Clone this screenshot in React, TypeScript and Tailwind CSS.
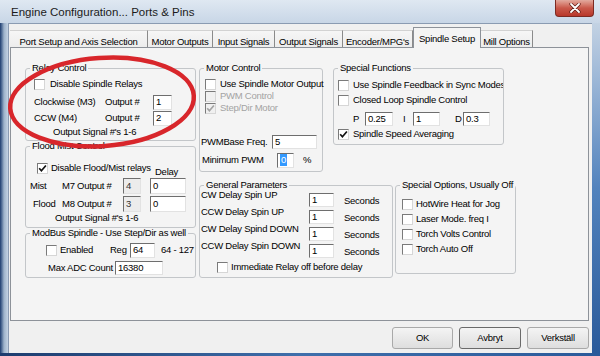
import React from "react";

const cx = (...a: (string | false | undefined | null)[]) => a.filter(Boolean).join(" ");

function Check({ checked = false, disabled = false }: { checked?: boolean; disabled?: boolean }) {
  return (
    <span
      className={cx(
        "inline-flex shrink-0 w-[11px] h-[11px] items-center justify-center border border-t-[#7a7a7a] border-l-[#7a7a7a] border-r-[#d6d6d6] border-b-[#d6d6d6]",
        disabled ? "bg-[#f0f0f0]" : "bg-white"
      )}
    >
      {checked && (
        <svg width="9" height="9" viewBox="0 0 9 9">
          <path d="M1.2 4.3 L3.4 6.8 L7.9 1.5" fill="none" stroke={disabled ? "#a3a3a3" : "#111"} strokeWidth="1.7" />
        </svg>
      )}
    </span>
  );
}

function Field({
  value,
  className,
  disabled = false,
  selected = false,
}: {
  value: string;
  className?: string;
  disabled?: boolean;
  selected?: boolean;
}) {
  return (
    <span
      className={cx(
        "flex shrink-0 items-center pl-[2px] leading-[12px] border border-t-[#6e6e6e] border-l-[#6e6e6e] border-r-[#e2e2e2] border-b-[#e2e2e2]",
        disabled ? "bg-[#ececec] text-[#333]" : "bg-white",
        className
      )}
    >
      {selected ? <span className="bg-[#3399ff] text-white px-[1px]">{value}</span> : value}
    </span>
  );
}

function Group({ title, className, children }: { title: string; className?: string; children?: React.ReactNode }) {
  return (
    <fieldset className={cx("shrink-0 min-w-0 border border-[#c3c6c9] rounded-[3px]", className)}>
      <legend className="ml-[4px] px-[2px] leading-[12px] h-[12px] whitespace-nowrap">{title}</legend>
      {children}
    </fieldset>
  );
}

function Btn({ children, className, def = false }: { children: React.ReactNode; className?: string; def?: boolean }) {
  return (
    <div
      className={cx(
        "h-[22px] flex items-center justify-center rounded-[3px] border bg-gradient-to-b from-[#f4f4f4] to-[#dedede]",
        def ? "border-[#6a6a6a]" : "border-[#a9a9a9]",
        className
      )}
    >
      {children}
    </div>
  );
}

function Tab({ label, className, selected = false }: { label: string; className?: string; selected?: boolean }) {
  if (selected) {
    return (
      <div
        className={cx(
          "h-[21px] flex items-center justify-center pt-[2px] border-l border-t border-r border-[#8d9299] bg-[#f4f4f4] relative z-10 whitespace-nowrap",
          className
        )}
      >
        {label}
      </div>
    );
  }
  return (
    <div
      className={cx(
        "h-[18px] flex items-center justify-center pt-[4px] border-t border-r border-t-[#d2d2d2] border-r-[#8a8a8a] bg-gradient-to-b from-[#f6f6f6] to-[#ececec] whitespace-nowrap",
        className
      )}
    >
      {label}
    </div>
  );
}

export default function App() {
  const gp = ["CW Delay Spin UP", "CCW Delay Spin UP", "CW Delay Spind DOWN", "CCW Delay Spin DOWN"];
  const so = ["HotWire Heat for Jog", "Laser Mode. freq I", "Torch Volts Control", "Torch Auto Off"];
  return (
    <div className="relative w-[600px] h-[356px] overflow-hidden flex flex-col bg-[#c3d2e3] font-['Liberation_Sans',Arial,sans-serif] text-[9.5px] tracking-[-0.25px] leading-[12px] text-black">
      {/* title bar */}
      <div className="relative h-[23px] shrink-0 flex items-center pl-[11px] bg-gradient-to-b from-[#dfe8f2] to-[#c8d6e6]">
        <span className="text-[11.5px] tracking-normal text-[#1b1b1b]">Engine Configuration... Ports &amp; Pins</span>
        <div className="absolute right-[6px] top-0 w-[39px] h-[17px] rounded-b-[4px] border border-t-0 border-[#7c2a22] bg-gradient-to-b from-[#e2a99e] via-[#c9584a] to-[#b8372a] flex items-center justify-center">
          <svg width="12" height="10" viewBox="0 0 12 10">
            <path d="M2 1 L10 9 M10 1 L2 9" stroke="#5a1a14" strokeWidth="3.2" strokeLinecap="round" />
            <path d="M2 1 L10 9 M10 1 L2 9" stroke="#ffffff" strokeWidth="1.8" strokeLinecap="round" />
          </svg>
        </div>
      </div>

      <div className="flex flex-1 min-h-0">
        {/* left frame */}
        <div className="w-[8px] shrink-0 bg-gradient-to-r from-[#1d3c6e] via-[#9db2ca] to-[#c3d2e3]" />

        {/* client */}
        <div className="flex-1 flex flex-col bg-[#f0f0f0] border-l border-t border-[#8a9bb2] pl-[1px] pr-[3px] pt-[3px]">
          {/* tabs */}
          <div className="h-[21px] -mb-[1px] flex items-end">
            <Tab label="Port Setup and Axis Selection" className="w-[138px]" />
            <Tab label="Motor Outputs" className="w-[65px]" />
            <Tab label="Input Signals" className="w-[62px]" />
            <Tab label="Output Signals" className="w-[68px]" />
            <Tab label="Encoder/MPG's" className="w-[70px]" />
            <Tab label="Spindle Setup" className="w-[68px] self-start" selected />
            <Tab label="Mill Options" className="w-[52px]" />
          </div>

          {/* panel */}
          <div className="h-[274px] shrink-0 border border-[#8d9299] bg-[#f4f4f4] flex pt-[14px] pl-[14px]">
            {/* left column */}
            <div className="w-[171px] shrink-0 flex flex-col">
              <Group title="Relay Control" className="h-[79px]">
                <div className="mt-[4px] h-[12px] flex items-center pl-[8px]">
                  <Check />
                  <span className="ml-[5px] whitespace-nowrap">Disable Spindle Relays</span>
                </div>
                <div className="mt-[4px] h-[16px] flex items-center pl-[8px]">
                  <span className="w-[71px] whitespace-nowrap">Clockwise (M3)</span>
                  <span className="w-[48px] whitespace-nowrap">Output #</span>
                  <Field value="1" className="w-[19px] h-[15px]" />
                </div>
                <div className="h-[16px] flex items-center pl-[8px]">
                  <span className="w-[71px] whitespace-nowrap">CCW (M4)</span>
                  <span className="w-[48px] whitespace-nowrap">Output #</span>
                  <Field value="2" className="w-[19px] h-[15px]" />
                </div>
                <div className="h-[12px] flex items-center pl-[27px] whitespace-nowrap">Output Signal #'s 1-6</div>
              </Group>

              <Group title="Flood Mist Control" className="h-[88px] -mt-[1px]">
                <div className="mt-[10px] h-[16px] flex items-start pl-[11px]">
                  <div className="w-[118px] h-[12px] flex items-center">
                    <Check checked />
                    <span className="ml-[3px] whitespace-nowrap">Disable Flood/Mist relays</span>
                  </div>
                  <span className="mt-[4px]">Delay</span>
                </div>
                <div className="-mt-[1px] h-[17px] flex items-center pl-[4px]">
                  <span className="w-[32px]">Mist</span>
                  <span className="w-[61px] whitespace-nowrap">M7 Output #</span>
                  <Field value="4" disabled className="w-[18px] h-[16px]" />
                  <Field value="0" className="ml-[9px] w-[36px] h-[16px]" />
                </div>
                <div className="mt-[1px] h-[17px] flex items-center pl-[7px]">
                  <span className="w-[29px]">Flood</span>
                  <span className="w-[61px] whitespace-nowrap">M8 Output #</span>
                  <Field value="3" disabled className="w-[18px] h-[16px]" />
                  <Field value="0" className="ml-[9px] w-[36px] h-[16px]" />
                </div>
                <div className="h-[12px] flex items-center pl-[29px] whitespace-nowrap">Output Signal #'s 1-6</div>
              </Group>

              <Group title="ModBus Spindle - Use Step/Dir as well" className="h-[51px] -mt-[1px]">
                <div className="mt-[3px] h-[16px] flex items-center pl-[20px]">
                  <Check />
                  <span className="ml-[3px] w-[50px]">Enabled</span>
                  <span className="w-[20px]">Reg</span>
                  <Field value="64" className="w-[25px] h-[15px]" />
                  <span className="ml-[6px] whitespace-nowrap">64 - 127</span>
                </div>
                <div className="mt-[2px] h-[16px] flex items-center pl-[22px]">
                  <span className="w-[67px] whitespace-nowrap">Max ADC Count</span>
                  <Field value="16380" className="w-[48px] h-[14px]" />
                </div>
              </Group>
            </div>

            {/* right area */}
            <div className="ml-[3px] flex flex-col">
              <div className="flex items-start">
                <Group title="Motor Control" className="w-[124px] h-[110px]">
                  <div className="mt-[4px] h-[12px] flex items-center pl-[5px]">
                    <Check />
                    <span className="ml-[4px] whitespace-nowrap">Use Spindle Motor Output</span>
                  </div>
                  <div className="h-[12px] flex items-center pl-[5px] text-[#a3a3a3]">
                    <Check disabled />
                    <span className="ml-[4px] whitespace-nowrap">PWM Control</span>
                  </div>
                  <div className="h-[12px] flex items-center pl-[5px] text-[#a3a3a3]">
                    <Check disabled checked />
                    <span className="ml-[4px] whitespace-nowrap">Step/Dir Motor</span>
                  </div>
                  <div className="mt-[20px] h-[16px] flex items-center pl-[1px]">
                    <span className="w-[71px] whitespace-nowrap">PWMBase Freq.</span>
                    <Field value="5" className="w-[45px] h-[14px]" />
                  </div>
                  <div className="mt-[2px] h-[16px] flex items-center pl-[2px]">
                    <span className="w-[75px] whitespace-nowrap">Minimum PWM</span>
                    <Field value="0" selected className="w-[17px] h-[15px]" />
                    <span className="ml-[9px]">%</span>
                  </div>
                </Group>

                <Group title="Special Functions" className="ml-[10px] w-[171px] h-[83px]">
                  <div className="mt-[5px] h-[12px] flex items-center pl-[4px] whitespace-nowrap overflow-hidden">
                    <Check />
                    <span className="ml-[4px]">Use Spindle Feedback in Sync Modes</span>
                  </div>
                  <div className="mt-[3px] h-[12px] flex items-center pl-[4px] whitespace-nowrap">
                    <Check />
                    <span className="ml-[4px]">Closed Loop Spindle Control</span>
                  </div>
                  <div className="mt-[5px] h-[15px] flex items-center pl-[19px]">
                    <span className="w-[12px]">P</span>
                    <Field value="0.25" className="w-[28px] h-[14px]" />
                    <span className="ml-[10px] w-[10px]">I</span>
                    <Field value="1" className="w-[27px] h-[14px]" />
                    <span className="ml-[15px] w-[8px]">D</span>
                    <Field value="0.3" className="w-[27px] h-[14px]" />
                  </div>
                  <div className="mt-[2px] h-[12px] flex items-center pl-[4px] whitespace-nowrap">
                    <Check checked />
                    <span className="ml-[4px]">Spindle Speed Averaging</span>
                  </div>
                </Group>
              </div>

              <div className="mt-[7px] flex items-start">
                <Group title="General Parameters" className="w-[194px] h-[99px]">
                  <div className="-mt-[2px] flex flex-col">
                    {gp.map((r) => (
                      <div key={r} className="h-[17px] flex items-start pl-[1px]">
                        <span className="w-[108px] leading-[12px] whitespace-nowrap">{r}</span>
                        <Field value="1" className="mt-[4px] w-[25px] h-[14px]" />
                        <span className="ml-[10px] mt-[6px] leading-[12px]">Seconds</span>
                      </div>
                    ))}
                  </div>
                  <div className="mt-[4px] h-[12px] flex items-center pl-[17px] whitespace-nowrap">
                    <Check />
                    <span className="ml-[3px]">Immediate Relay off before delay</span>
                  </div>
                </Group>

                <Group title="Special Options, Usually Off" className="ml-[2px] w-[121px] h-[95px]">
                  <div className="mt-[7px] flex flex-col gap-[3px] pl-[6px]">
                    {so.map((t) => (
                      <div key={t} className="h-[12px] flex items-center whitespace-nowrap">
                        <Check />
                        <span className="ml-[3px]">{t}</span>
                      </div>
                    ))}
                  </div>
                </Group>
              </div>
            </div>
          </div>

          {/* buttons */}
          <div className="mt-[6px] flex justify-end gap-[6px]">
            <Btn className="w-[61px]">OK</Btn>
            <Btn className="w-[62px]" def>
              Avbryt
            </Btn>
            <Btn className="w-[62px]">Verkställ</Btn>
          </div>
        </div>

        {/* right frame */}
        <div className="w-[8px] shrink-0 bg-gradient-to-b from-[#c3d2e3] via-[#5283bd] to-[#2a5a9a]" />
      </div>
      <div className="h-[3px] shrink-0 bg-gradient-to-r from-[#1d3c6e] via-[#3f6fab] to-[#2a5a9a]" />

      {/* annotation */}
      <svg className="absolute left-0 top-0 pointer-events-none" width="600" height="356" viewBox="0 0 600 356">
        <ellipse cx="102" cy="102" rx="92" ry="44" transform="rotate(-4 102 102)" fill="none" stroke="#d8262b" strokeWidth="4.5" />
      </svg>
    </div>
  );
}
